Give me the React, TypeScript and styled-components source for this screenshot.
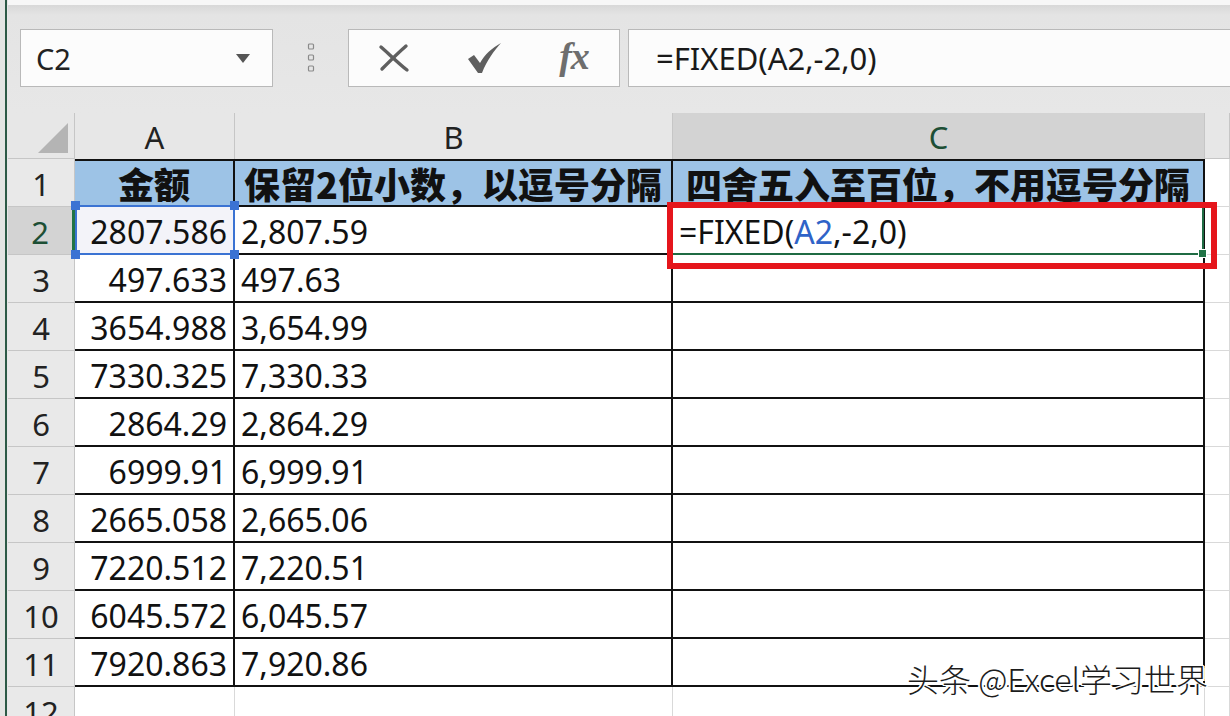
import React from 'react';
import styled, { createGlobalStyle } from 'styled-components';

const Global = createGlobalStyle`
  html, body { margin: 0; padding: 0; background: #e7e7e7; }
  body { font-family: "Noto Sans", "Noto Sans CJK SC", sans-serif; }
  #root { width: 1230px; height: 716px; overflow: hidden; }
`;

const Page = styled.div`
  position: relative;
  width: 1230px;
  height: 716px;
  display: flex;
  overflow: hidden;
  background: #e7e7e7;
`;

const LeftEdge = styled.div`
  width: 5px;
  flex: none;
  background: #e3e5e3;
  border-right: 2px solid #2c5a46;
  margin-right: 1px;
`;

const Main = styled.div`
  flex: 1;
  min-width: 0;
  display: flex;
  flex-direction: column;
`;

const TopStrip = styled.div`
  height: 5px;
  flex: none;
  background: #f7f7f7;
`;

const Toolbar = styled.div`
  height: 108px;
  flex: none;
  box-sizing: border-box;
  padding: 24px 0 0 12px;
  display: flex;
  align-items: flex-start;
  background: linear-gradient(#d8d8d8 0px, #e4e4e4 10px, #e7e7e7 100%);
`;

const NameBox = styled.div`
  width: 253px;
  height: 58px;
  flex: none;
  box-sizing: border-box;
  border: 1px solid #b9b9b9;
  background: #fcfcfc;
  display: flex;
  align-items: center;
  justify-content: space-between;
  padding: 0 22px 0 15px;
  font-size: 29px;
  color: #222;
`;

const Grip = styled.div`
  width: 75px;
  height: 58px;
  flex: none;
  display: flex;
  align-items: center;
  justify-content: center;
`;

const FxButtons = styled.div`
  width: 272px;
  height: 58px;
  flex: none;
  box-sizing: border-box;
  border: 1px solid #b9b9b9;
  background: #fcfcfc;
  display: grid;
  grid-template-columns: repeat(3, 1fr);
  align-items: center;
  justify-items: center;
`;

const FxLabel = styled.span`
  font-family: "Liberation Serif", "DejaVu Serif", serif;
  font-style: italic;
  font-weight: 700;
  font-size: 38px;
  color: #6e6e6e;
  letter-spacing: -1px;
  line-height: 1;
  margin-top: -4px;
`;

const FormulaInput = styled.div`
  flex: 1;
  height: 58px;
  margin-left: 8px;
  box-sizing: border-box;
  border: 1px solid #b9b9b9;
  border-right: none;
  background: #fcfcfc;
  display: flex;
  align-items: center;
  padding-left: 27px;
  font-size: 31px;
  color: #1a1a1a;
  white-space: nowrap;
`;

const Sheet = styled.div`
  flex: 1;
  display: grid;
  grid-template-columns: 67px 160px 438px 532px 1fr;
  grid-template-rows: 46px repeat(12, 48px);
  background: #fff;
  overflow: hidden;
`;

const Corner = styled.div`
  background: #e7e7e7;
  border-right: 1px solid #c6c6c6;
  border-bottom: 1px solid #c6c6c6;
  display: flex;
  align-items: flex-end;
  justify-content: flex-end;
  padding: 0 6px 5px 0;
`;

const ColHeader = styled.div<{ $selected?: boolean; $tail?: boolean }>`
  box-sizing: border-box;
  background: ${p => (p.$selected ? '#d3d3d3' : '#e7e7e7')};
  border-right: 1px solid #c6c6c6;
  border-bottom: ${p => (p.$tail ? '1px solid #c6c6c6' : 'none')};
  display: flex;
  align-items: center;
  justify-content: center;
  font-size: 31px;
  color: ${p => (p.$selected ? '#1d4f35' : '#222')};
  padding-top: 2px;
`;

const RowHeader = styled.div<{ $selected?: boolean }>`
  box-sizing: border-box;
  background: ${p => (p.$selected ? '#d3d3d3' : '#e9e9e9')};
  border-bottom: 1px solid #c6c6c6;
  border-right: ${p => (p.$selected ? '3px solid #217346' : '1px solid #c6c6c6')};
  display: flex;
  align-items: center;
  justify-content: center;
  padding-top: 3px;
  font-size: 31px;
  color: ${p => (p.$selected ? '#1d4f35' : '#222')};
`;

type CellProps = {
  $align?: 'left' | 'right' | 'center';
  $head?: boolean;
  $top?: boolean;
  $outside?: boolean;
  $tint?: boolean;
};

const Cell = styled.div<CellProps>`
  position: relative;
  box-sizing: border-box;
  min-width: 0;
  display: flex;
  align-items: center;
  justify-content: ${p =>
    p.$align === 'right' ? 'flex-end' : p.$align === 'center' ? 'center' : 'flex-start'};
  padding: ${p => (p.$head ? '0 4px' : '3px 6px 0 6px')};
  white-space: nowrap;
  background: ${p => (p.$head ? '#9dc3e6' : p.$tint ? '#f3f3f9' : '#ffffff')};
  border-right: ${p => (p.$outside ? '1px solid #d9d9d9' : '2px solid #111')};
  border-bottom: ${p => (p.$outside ? '1px solid #d9d9d9' : '2px solid #111')};
  border-top: ${p => (p.$top ? '2px solid #111' : 'none')};
  font-family: ${p =>
    p.$head ? '"Noto Sans CJK SC", "Noto Sans", sans-serif' : '"Noto Sans", "Noto Sans CJK SC", sans-serif'};
  font-weight: ${p => (p.$head ? 900 : 400)};
  font-size: ${p => (p.$head ? '36px' : '32px')};
  color: #111;
`;

const RefFrame = styled.div`
  position: absolute;
  left: 0;
  top: -2px;
  right: -2px;
  bottom: -2px;
  border: 2px solid #3b73d3;
  pointer-events: none;
  z-index: 4;
`;

const Handle = styled.span<{ $x: 'l' | 'r'; $y: 't' | 'b' }>`
  position: absolute;
  width: 9px;
  height: 9px;
  background: #3b73d3;
  ${p => (p.$x === 'l' ? 'left: -6px;' : 'right: -6px;')}
  ${p => (p.$y === 't' ? 'top: -6px;' : 'bottom: -6px;')}
`;

const ActiveFrame = styled.div`
  position: absolute;
  left: 0;
  top: 0;
  right: -1px;
  bottom: -2px;
  border-right: 2px solid #1f6b43;
  border-bottom: 2px solid #1f6b43;
  pointer-events: none;
  z-index: 4;
`;

const FillHandle = styled.span`
  position: absolute;
  right: -5px;
  bottom: -5px;
  width: 7px;
  height: 7px;
  background: #217346;
  border: 1px solid #fff;
`;

const Highlight = styled.div`
  position: absolute;
  left: -6px;
  top: -5px;
  right: -14px;
  bottom: -16px;
  border: 6px solid #e5161c;
  pointer-events: none;
  z-index: 6;
`;

const Ref = styled.span`
  color: #2f63c8;
`;

const Watermark = styled.div`
  position: absolute;
  right: 22px;
  top: 655px;
  font-family: "Noto Sans CJK SC", "Noto Sans", sans-serif;
  font-size: 32px;
  font-weight: 300;
  color: #1c1c1c;
  white-space: nowrap;
  text-shadow: 1px 1px 0 #fff, -1px -1px 0 #fff, 1px -1px 0 #fff, -1px 1px 0 #fff, 2px 2px 0 #fff,
    -2px 0 0 #fff, 2px 0 0 #fff;
  z-index: 8;
`;

const amounts = [
  '2807.586', '497.633', '3654.988', '7330.325', '2864.29',
  '6999.91', '2665.058', '7220.512', '6045.572', '7920.863',
];
const formatted = [
  '2,807.59', '497.63', '3,654.99', '7,330.33', '2,864.29',
  '6,999.91', '2,665.06', '7,220.51', '6,045.57', '7,920.86',
];

const CrossIcon = () => (
  <svg width="34" height="32" viewBox="0 0 34 32">
    <path d="M4 5 C10 10 20 20 30 28" stroke="#5f5f5f" strokeWidth="3.4" fill="none" strokeLinecap="round" />
    <path d="M29 4 C22 10 12 20 5 27" stroke="#5f5f5f" strokeWidth="3.4" fill="none" strokeLinecap="round" />
  </svg>
);

const CheckIcon = () => (
  <svg width="36" height="32" viewBox="0 0 36 32">
    <path d="M2 17 L8 13 L14 21 C19 12 26 6 35 1 C28 9 21 18 16 31 L12 31 Z" fill="#5f5f5f" />
  </svg>
);

const DropTriangle = () => (
  <svg width="14" height="9" viewBox="0 0 14 9">
    <path d="M0 0 L14 0 L7 9 Z" fill="#555" />
  </svg>
);

const GripDots = () => (
  <svg width="8" height="32" viewBox="0 0 8 32">
    {[2, 13, 24].map(y => (
      <rect key={y} x="1.5" y={y} width="5" height="5" rx="1" fill="none" stroke="#8a8a8a" strokeWidth="1.2" />
    ))}
  </svg>
);

const CornerTriangle = () => (
  <svg width="30" height="30" viewBox="0 0 30 30">
    <path d="M30 0 L30 30 L0 30 Z" fill="#b4b4b4" />
  </svg>
);

export default function App() {
  return (
    <>
      <Global />
      <Page>
        <LeftEdge />
        <Main>
          <TopStrip />
          <Toolbar>
            <NameBox>
              <span>C2</span>
              <DropTriangle />
            </NameBox>
            <Grip>
              <GripDots />
            </Grip>
            <FxButtons>
              <CrossIcon />
              <CheckIcon />
              <FxLabel>fx</FxLabel>
            </FxButtons>
            <FormulaInput>=FIXED(A2,-2,0)</FormulaInput>
          </Toolbar>
          <Sheet>
            <Corner>
              <CornerTriangle />
            </Corner>
            <ColHeader>A</ColHeader>
            <ColHeader>B</ColHeader>
            <ColHeader $selected>C</ColHeader>
            <ColHeader $tail />

            <RowHeader>1</RowHeader>
            <Cell $head $top $align="center">金额</Cell>
            <Cell $head $top $align="center">保留2位小数，以逗号分隔</Cell>
            <Cell $head $top $align="center">四舍五入至百位，不用逗号分隔</Cell>
            <Cell $outside />

            {amounts.map((a, i) => {
              const row = i + 2;
              const isActive = row === 2;
              return (
                <React.Fragment key={row}>
                  <RowHeader $selected={isActive}>{row}</RowHeader>
                  <Cell $align="right" $tint={isActive}>
                    {a}
                    {isActive && (
                      <RefFrame>
                        <Handle $x="l" $y="t" />
                        <Handle $x="r" $y="t" />
                        <Handle $x="l" $y="b" />
                        <Handle $x="r" $y="b" />
                      </RefFrame>
                    )}
                  </Cell>
                  <Cell $align="left">{formatted[i]}</Cell>
                  <Cell $align="left">
                    {isActive && (
                      <>
                        =FIXED(<Ref>A2</Ref>,-2,0)
                        <ActiveFrame>
                          <FillHandle />
                        </ActiveFrame>
                        <Highlight />
                      </>
                    )}
                  </Cell>
                  <Cell $outside />
                </React.Fragment>
              );
            })}

            <RowHeader>12</RowHeader>
            <Cell $outside />
            <Cell $outside />
            <Cell $outside />
            <Cell $outside />
          </Sheet>
        </Main>
        <Watermark>头条 @Excel学习世界</Watermark>
      </Page>
    </>
  );
}
